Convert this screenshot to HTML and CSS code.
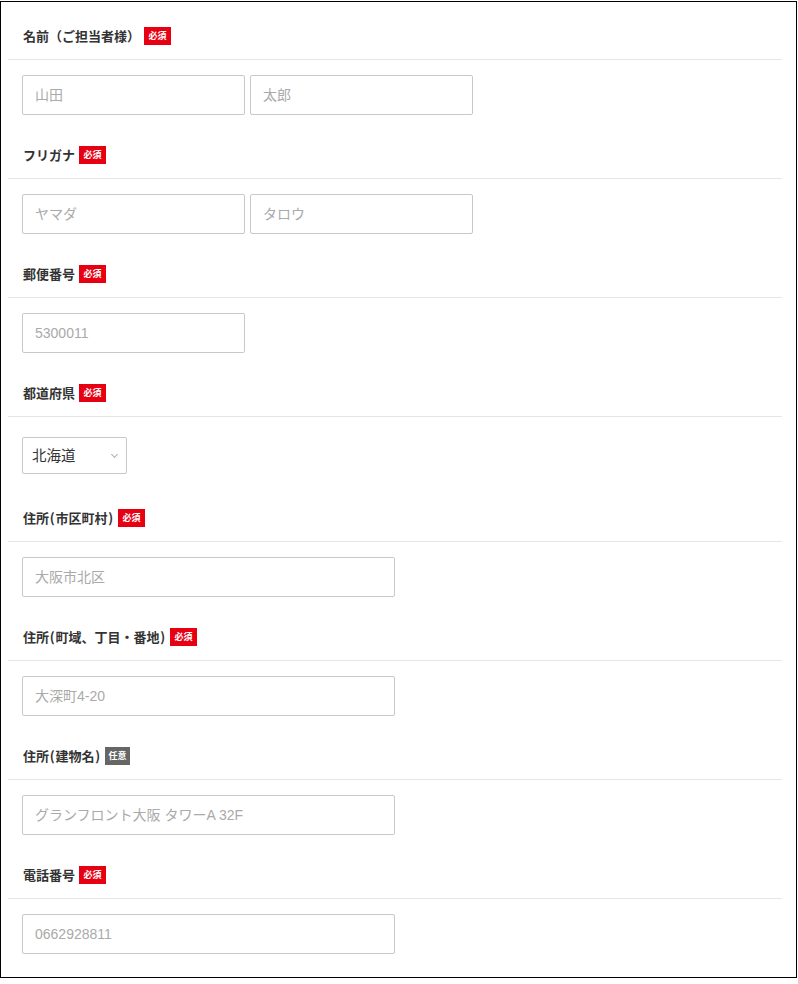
FILE: index.html
```html
<!DOCTYPE html>
<html lang="ja">

<head>
    <meta charset="UTF-8">
    <title>お届け先情報</title>
    <link rel="stylesheet" href="styles.css">
</head>

<body>
    <div id="form-box">
        <div class="field">
            <div class="field-head">名前（ご担当者様）<span class="badge">必須</span></div>
            <div class="field-body">
                <input type="text" class="input half" placeholder="山田">
                <input type="text" class="input half" placeholder="太郎">
            </div>
        </div>
        <div class="field">
            <div class="field-head">フリガナ<span class="badge">必須</span></div>
            <div class="field-body">
                <input type="text" class="input half" placeholder="ヤマダ">
                <input type="text" class="input half" placeholder="タロウ">
            </div>
        </div>
        <div class="field">
            <div class="field-head">郵便番号<span class="badge">必須</span></div>
            <div class="field-body">
                <input type="text" class="input half" placeholder="5300011">
            </div>
        </div>
        <div class="field">
            <div class="field-head">都道府県<span class="badge">必須</span></div>
            <div class="field-body">
                <div class="select-wrap">
                    <select class="select">
                        <option>北海道</option>
                        <option>青森県</option>
                        <option>大阪府</option>
                    </select>
                </div>
            </div>
        </div>
        <div class="field">
            <div class="field-head">住所<span class="paren">(</span>市区町村<span class="paren">)</span><span class="badge">必須</span></div>
            <div class="field-body">
                <input type="text" class="input wide" placeholder="大阪市北区">
            </div>
        </div>
        <div class="field">
            <div class="field-head">住所<span class="paren">(</span>町域、丁目・番地<span class="paren">)</span><span class="badge">必須</span></div>
            <div class="field-body">
                <input type="text" class="input wide" placeholder="大深町4-20">
            </div>
        </div>
        <div class="field">
            <div class="field-head">住所<span class="paren">(</span>建物名<span class="paren">)</span><span class="badge optional">任意</span></div>
            <div class="field-body">
                <input type="text" class="input wide" placeholder="グランフロント大阪 タワーA 32F">
            </div>
        </div>
        <div class="field">
            <div class="field-head">電話番号<span class="badge">必須</span></div>
            <div class="field-body">
                <input type="tel" class="input wide" placeholder="0662928811">
            </div>
        </div>
    </div>
</body>

</html>
```

FILE: styles.css
```css
* {
    padding: 0;
    margin: 0;
    box-sizing: border-box;
}

body {
    background: #fff;
    font-family: "Liberation Sans", "Noto Sans CJK JP", sans-serif;
    color: #333;
}

#form-box {
    width: 797px;
    margin-top: 1px;
    padding: 9px 0 8px;
    border: 1px solid #000;
}

.field {
    margin: 0 14px 0 7px;
}

.field-head {
    display: flex;
    align-items: center;
    padding: 15px 15px 13px;
    height: 49px;
    line-height: 20px;
    font-family: "Noto Sans CJK JP", sans-serif;
    font-size: 13px;
    font-weight: bold;
    color: #333;
    border-bottom: 1px solid #e6e6e6;
}

/* 半角カッコは幅を揃える */
.paren {
    display: inline-block;
    width: 6.5px;
    text-align: center;
}

.badge {
    display: inline-block;
    width: 27px;
    height: 18px;
    margin-left: 4px;
    line-height: 18px;
    text-align: center;
    font-size: 9px;
    font-weight: bold;
    color: #fff;
    background: #e60012;
}

.badge.optional {
    width: 25px;
    background: #666;
}

.field-body {
    display: flex;
    gap: 5px;
    padding: 15px 14px;
}

.input {
    height: 40px;
    padding: 0 12px;
    border: 1px solid #c8c8c8;
    border-radius: 2px;
    font-family: "Liberation Sans", "Noto Sans CJK JP", sans-serif;
    font-size: 14px;
    color: #333;
    outline: none;
}

.input::placeholder {
    color: #aaa;
}

.half {
    width: 223px;
}

.wide {
    width: 373px;
}

.select-wrap {
    position: relative;
    margin: 5px 0 4px;
}

.select-wrap::after {
    content: "";
    position: absolute;
    top: 15px;
    right: 10px;
    width: 4px;
    height: 4px;
    border-right: 1px solid #b0b0b0;
    border-bottom: 1px solid #b0b0b0;
    transform: rotate(45deg);
    pointer-events: none;
}

.select {
    -webkit-appearance: none;
    appearance: none;
    width: 105px;
    height: 37px;
    padding: 0 9px;
    border: 1px solid #c8c8c8;
    border-radius: 2px;
    background: #fff;
    font-family: "Liberation Sans", "Noto Sans CJK JP", sans-serif;
    font-size: 14.5px;
    color: #333;
}
```
